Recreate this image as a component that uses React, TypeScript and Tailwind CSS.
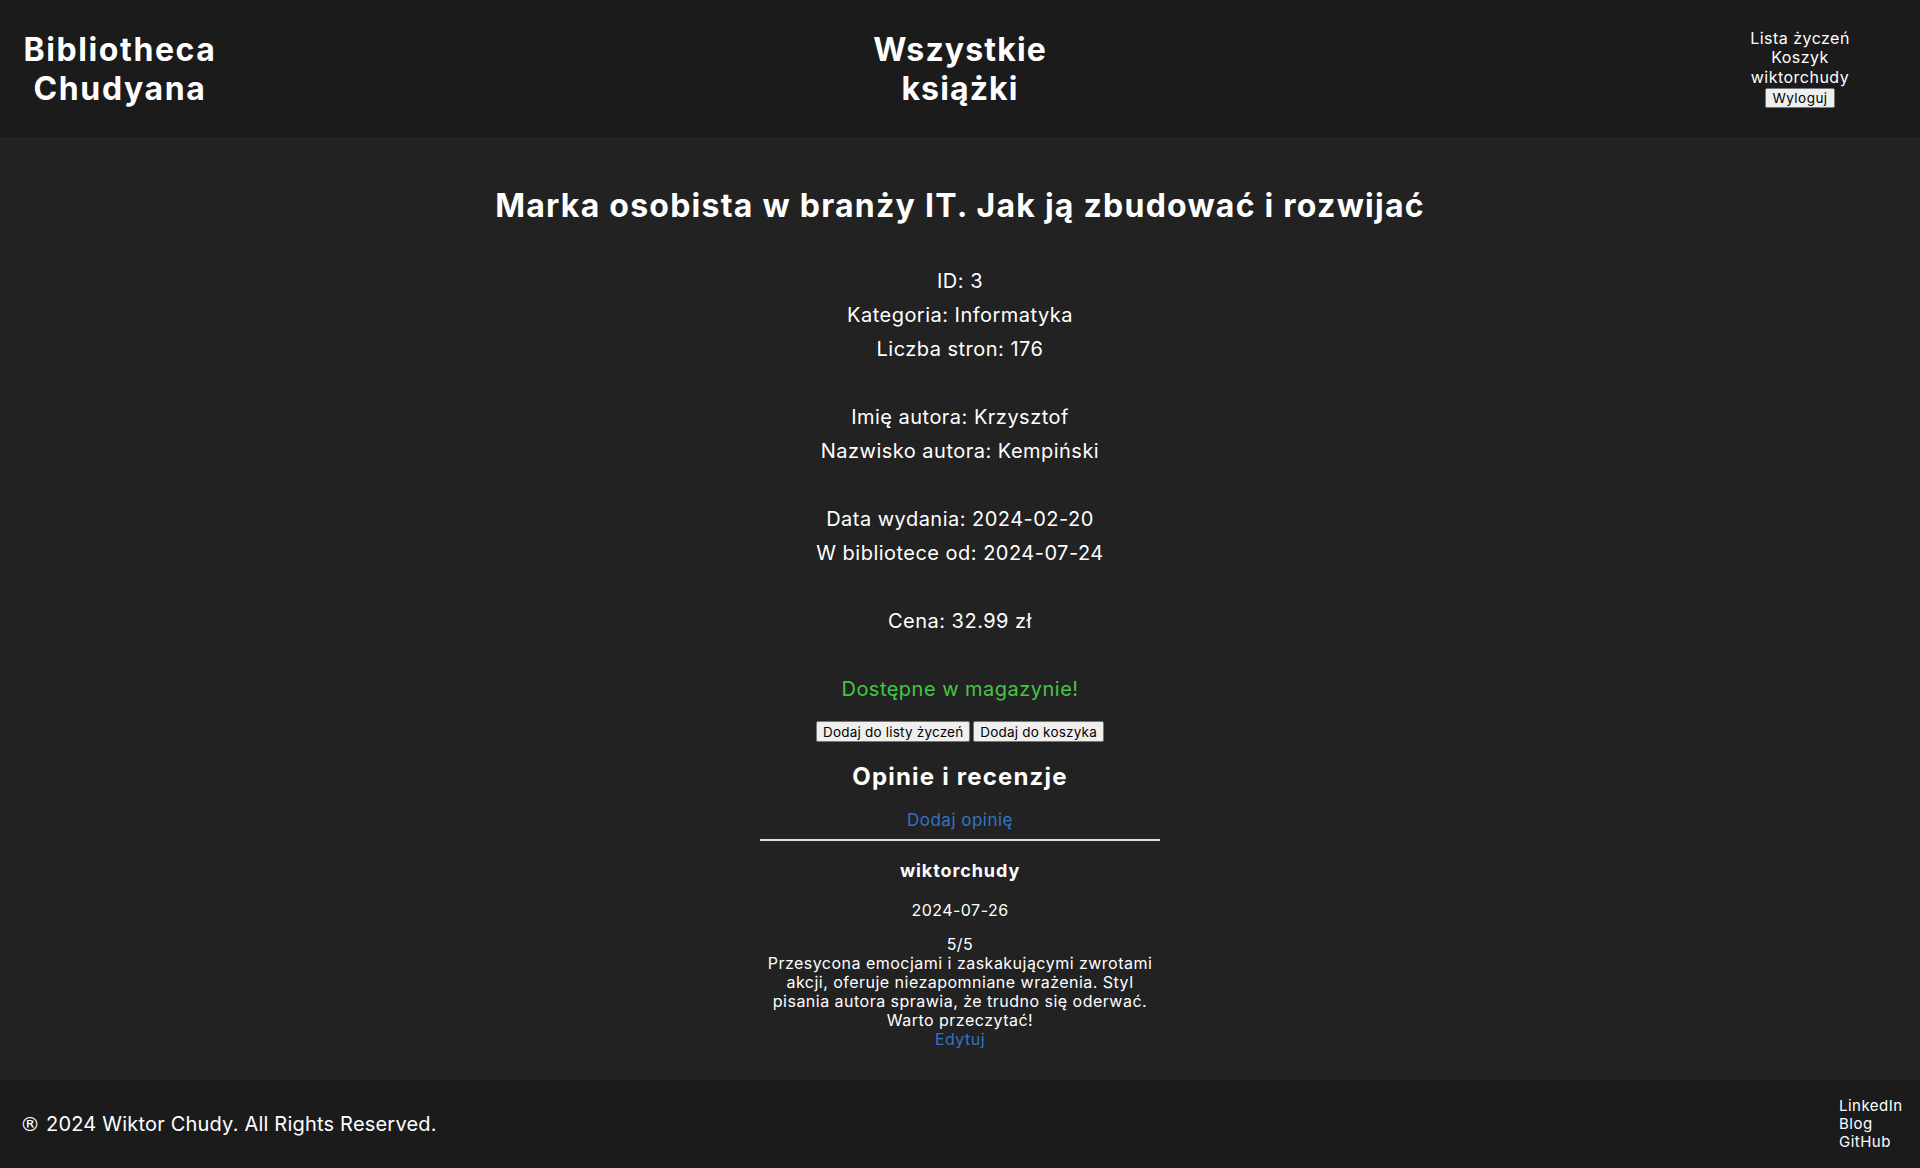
import React from "react";

const font = { fontFamily: 'Inter, "Noto Sans", sans-serif' };

export default function App() {
  return (
    <div
      className="min-h-[1168px] flex flex-col bg-[#222222] text-white tracking-[0.03em]"
      style={font}
    >
      <header className="h-[137px] bg-[#1b1b1b] flex items-center justify-between">
        <div className="w-[240px] text-center text-[32px] leading-[39px] font-bold tracking-[0.05em]">
          Bibliotheca
          <br />
          Chudyana
        </div>
        <div className="text-center text-[32px] leading-[39px] font-bold tracking-[0.035em]">
          Wszystkie
          <br />
          książki
        </div>
        <div className="w-[240px] flex flex-col items-center text-[16px] leading-[19.5px]">
          <a>Lista życzeń</a>
          <a>Koszyk</a>
          <span>wiktorchudy</span>
          <button className="mt-px bg-[#efefef] text-black border border-[#767676] rounded-[2px] px-[6px] h-[20px] text-[13.5px] leading-[16px]">
            Wyloguj
          </button>
        </div>
      </header>

      <main className="flex-1 flex flex-col items-center pt-[49px]">
        <h1 className="text-[32px] leading-[39px] font-bold tracking-[0.039em]">
          Marka osobista w branży IT. Jak ją zbudować i rozwijać
        </h1>
        <div className="mt-[39px] text-[20px] leading-[34px] text-center">
          <div>ID: 3</div>
          <div>Kategoria: Informatyka</div>
          <div>Liczba stron: 176</div>
          <div className="h-[34px]" />
          <div>Imię autora: Krzysztof</div>
          <div>Nazwisko autora: Kempiński</div>
          <div className="h-[34px]" />
          <div>Data wydania: 2024-02-20</div>
          <div>W bibliotece od: 2024-07-24</div>
          <div className="h-[34px]" />
          <div>Cena: 32.99 zł</div>
          <div className="h-[34px]" />
          <div className="text-[#42c742]">Dostępne w magazynie!</div>
        </div>
        <div className="mt-[15px] flex gap-[3px]">
          <button className="bg-[#efefef] text-black border border-[#767676] rounded-[2px] px-[6px] h-[21px] text-[13.5px] leading-[16px] tracking-[0.015em]">
            Dodaj do listy życzeń
          </button>
          <button className="bg-[#efefef] text-black border border-[#767676] rounded-[2px] px-[6px] h-[21px] text-[13.5px] leading-[16px] tracking-[0.015em]">
            Dodaj do koszyka
          </button>
        </div>
        <h2 className="mt-[20px] text-[24px] leading-[29px] font-bold tracking-[0.05em]">
          Opinie i recenzje
        </h2>
        <a className="mt-[19px] text-[17px] leading-[21px] text-[#3274c2]">
          Dodaj opinię
        </a>
        <div className="mt-[8px] w-[400px] h-[2px] bg-[#dddddd]" />
        <div className="w-[400px] flex flex-col items-center text-center">
          <h3 className="mt-[19px] text-[18px] leading-[22px] font-bold tracking-[0.05em]">
            wiktorchudy
          </h3>
          <div className="mt-[19px] text-[16px] leading-[19.5px]">
            2024-07-26
          </div>
          <div className="mt-[14px] text-[16px] leading-[19px]">
            5/5
            <br />
            Przesycona emocjami i zaskakującymi zwrotami
            <br />
            akcji, oferuje niezapomniane wrażenia. Styl
            <br />
            pisania autora sprawia, że trudno się oderwać.
            <br />
            Warto przeczytać!
            <br />
            <a className="text-[#3274c2]">Edytuj</a>
          </div>
        </div>
      </main>

      <footer className="h-[88px] bg-[#1b1b1b] flex items-center justify-between pl-[20px] pr-[21px]">
        <div className="text-[20px] leading-[24px] tracking-[0.01em]">
          <span style={{ fontFamily: '"DejaVu Sans", sans-serif' }}>®</span>{" "}
          2024 Wiktor Chudy. All Rights Reserved.
        </div>
        <div className="flex flex-col text-[15px] leading-[18px] w-[60px]">
          <a>LinkedIn</a>
          <a>Blog</a>
          <a>GitHub</a>
        </div>
      </footer>
    </div>
  );
}
